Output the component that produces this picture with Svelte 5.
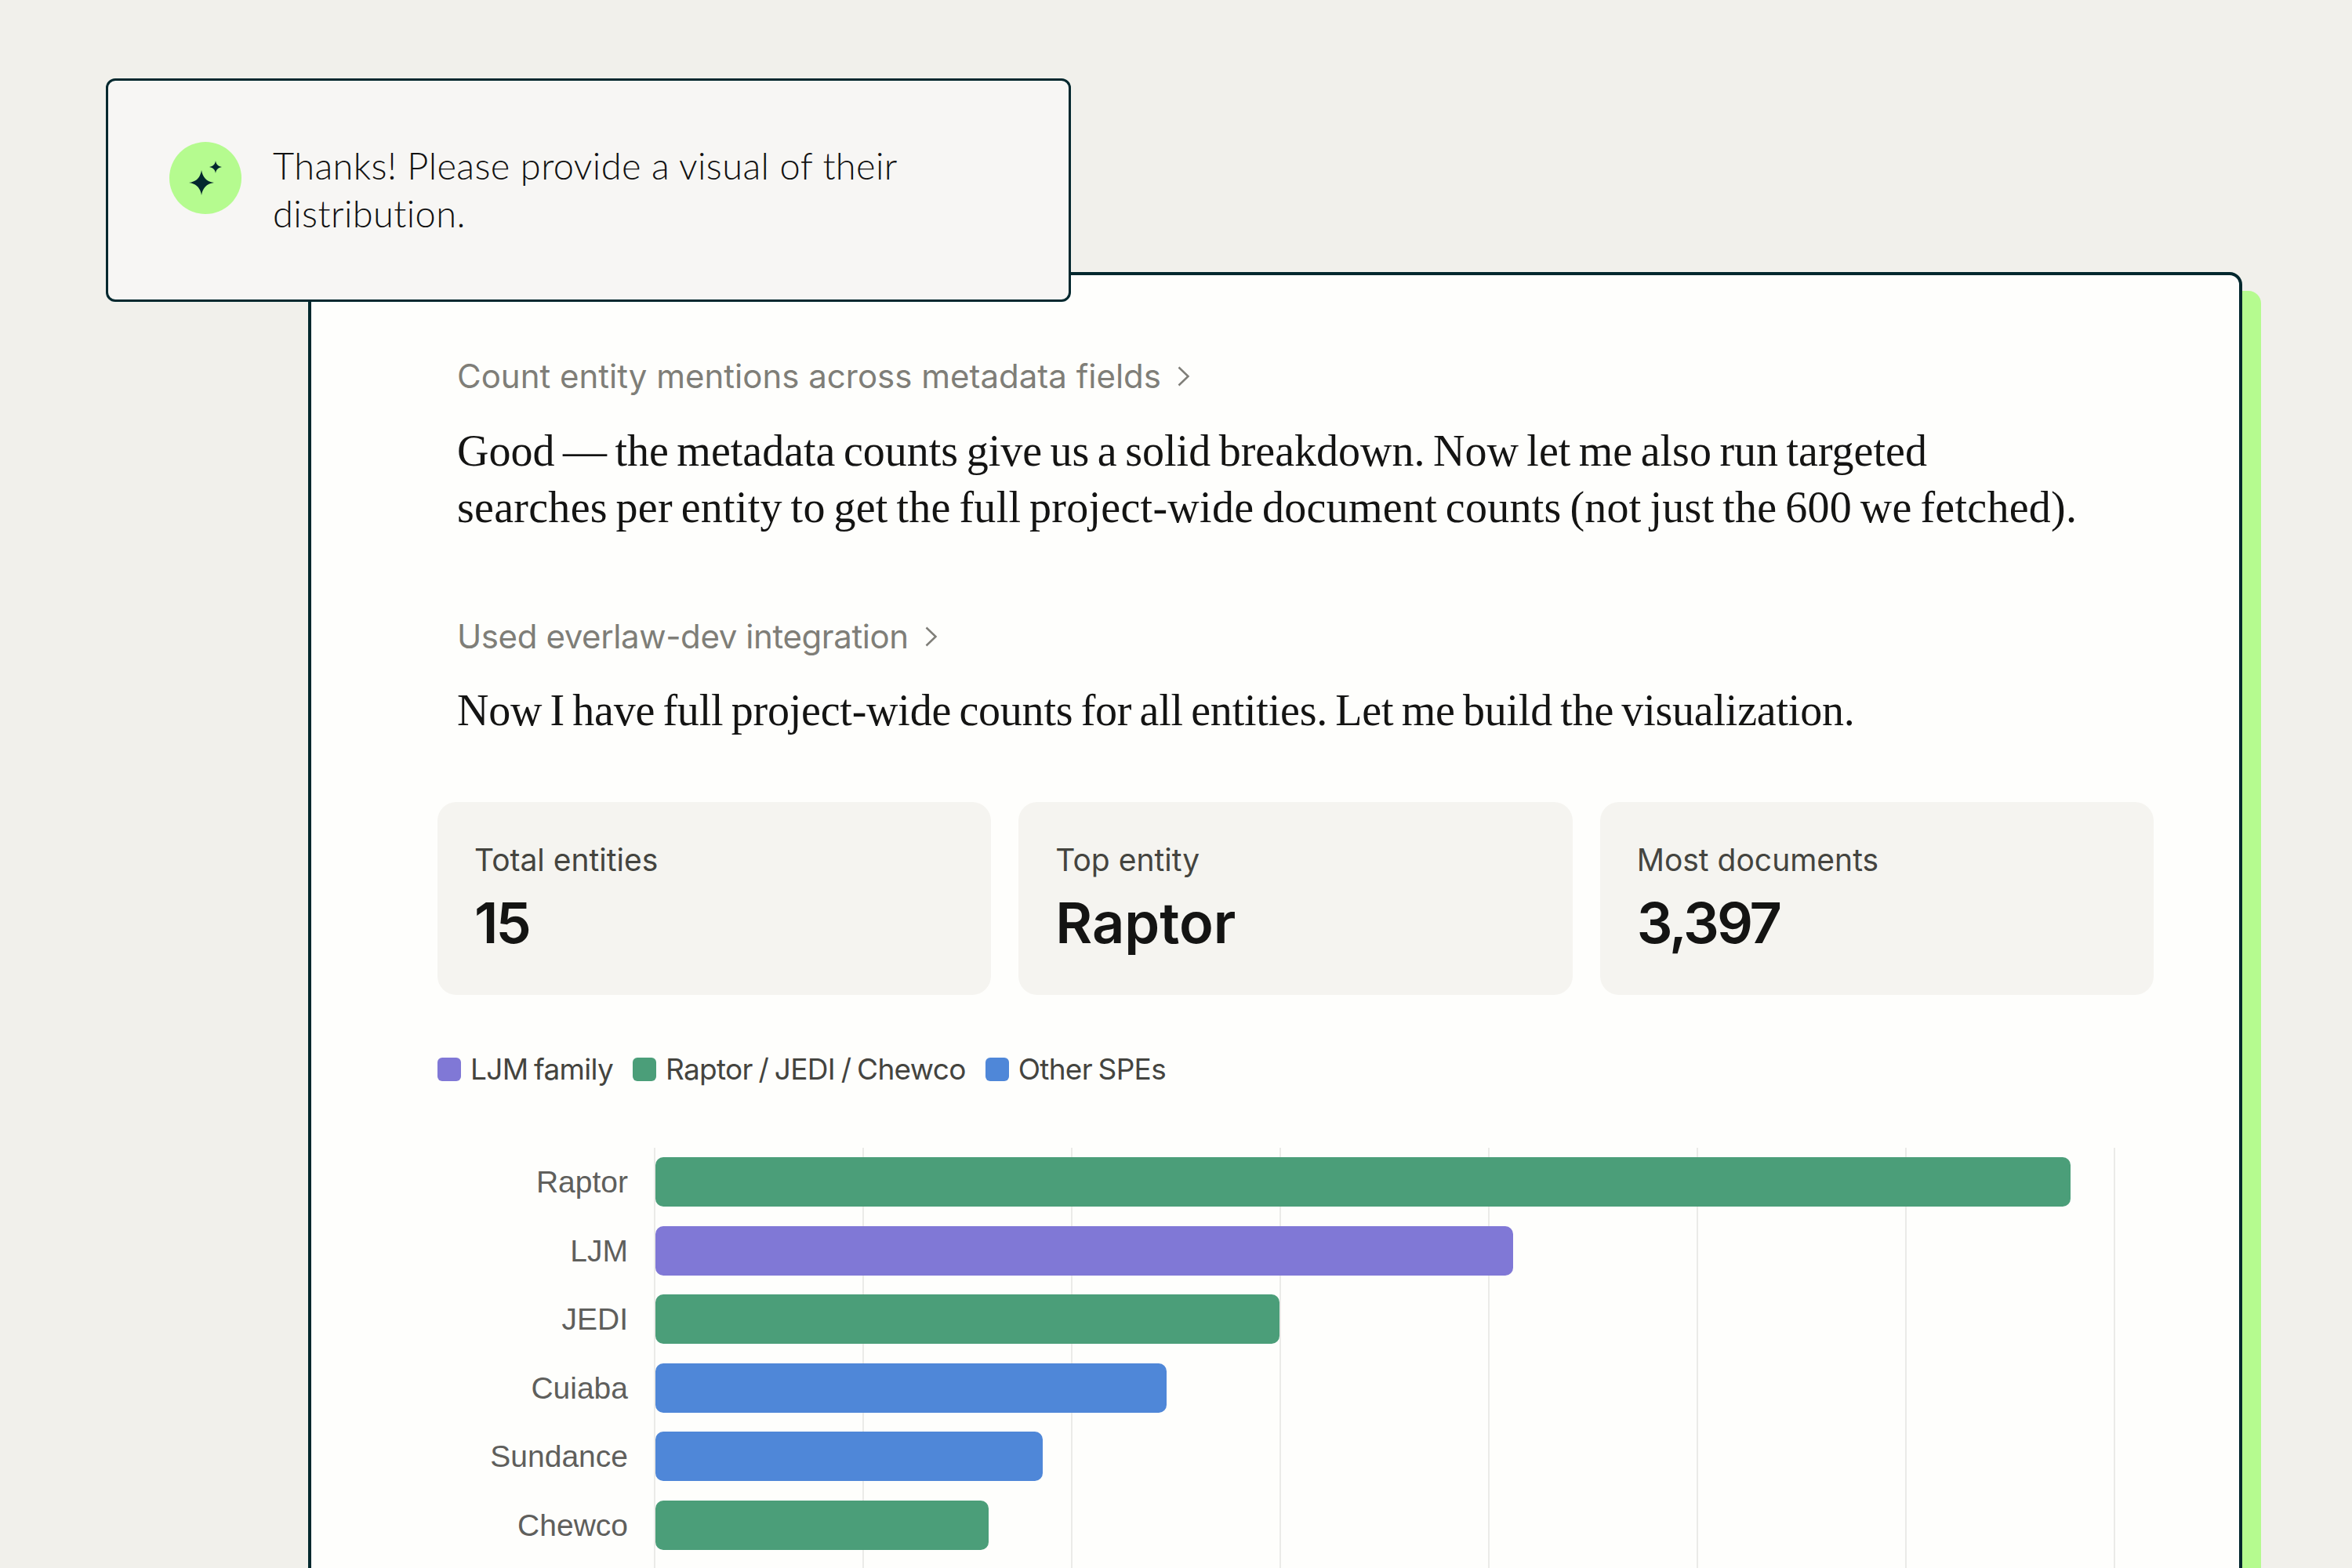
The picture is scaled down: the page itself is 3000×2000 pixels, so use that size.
<script>
  const stats = [
    { label: 'Total entities', value: '15', num: true },
    { label: 'Top entity', value: 'Raptor', num: false },
    { label: 'Most documents', value: '3,397', num: true },
  ];
  const groups = [
    { name: 'LJM family', color: '#8078d6' },
    { name: 'Raptor / JEDI / Chewco', color: '#4b9e79' },
    { name: 'Other SPEs', color: '#4f87d8' },
  ];
  const bars = [
    { name: 'Raptor', docs: 3397, color: '#4b9e79' },
    { name: 'LJM', docs: 2060, color: '#8078d6' },
    { name: 'JEDI', docs: 1500, color: '#4b9e79' },
    { name: 'Cuiaba', docs: 1229, color: '#4f87d8' },
    { name: 'Sundance', docs: 932, color: '#4f87d8' },
    { name: 'Chewco', docs: 803, color: '#4b9e79' },
  ];
  const pxPerDoc = 266 / 500;
</script>

<div class="page">
  <div class="prompt">
    <div class="avatar">
      <svg viewBox="0 0 92 92" width="92" height="92">
        <path d="M41 36C42.5 45 47 50.5 57 52C47 53.5 42.5 59 41 68C39.5 59 35 53.5 25 52C35 50.5 39.5 45 41 36Z" />
        <path d="M59 24C59.6 28.5 62 31 67 32C62 33 59.6 35.5 59 40C58.4 35.5 56 33 51 32C56 31 58.4 28.5 59 24Z" />
      </svg>
    </div>
    <p class="prompt_text">Thanks! Please provide a visual of their distribution.</p>
  </div>

  <div class="panel">
    <div class="step step_first">
      <div class="step_title">
        Count entity mentions across metadata fields
        <svg class="chev" viewBox="0 0 16 26" width="16" height="26"><path d="M1.5 1.5l12 11.5-12 11.5" /></svg>
      </div>
      <p class="step_body">
        Good — the metadata counts give us a solid breakdown. Now let me also run targeted<br />
        <span class="loose">searches per entity to get the full project-wide document counts (not just the 600 we fetched).</span>
      </p>
    </div>
    <div class="step">
      <div class="step_title narrow">
        Used everlaw-dev integration
        <svg class="chev" viewBox="0 0 16 26" width="16" height="26"><path d="M1.5 1.5l12 11.5-12 11.5" /></svg>
      </div>
      <p class="step_body tight">Now I have full project-wide counts for all entities. Let me build the visualization.</p>
    </div>

    <div class="stats">
      {#each stats as stat}
        <div class="stat">
          <div class="stat_label">{stat.label}</div>
          <div class="stat_value" class:num={stat.num}>{stat.value}</div>
        </div>
      {/each}
    </div>

    <div class="legend">
      {#each groups as group}
        <div class="legend_item">
          <span class="swatch" style="background: {group.color}"></span>
          {group.name}
        </div>
      {/each}
    </div>

    <div class="chart">
      <div class="chart_names">
        {#each bars as bar}
          <div class="chart_name">{bar.name}</div>
        {/each}
      </div>
      <div class="chart_plot">
        {#each bars as bar}
          <div class="bar" style="width: {bar.docs * pxPerDoc - 2}px; background: {bar.color}"></div>
        {/each}
      </div>
    </div>
  </div>
</div>

<style>
  :global(body) {
    margin: 0;
  }
  .page {
    width: 3000px;
    height: 2000px;
    overflow: hidden;
    background: #f1f0eb;
    box-sizing: border-box;
    padding-top: 100px;
  }
  .prompt {
    position: relative;
    z-index: 1;
    display: flex;
    align-items: flex-start;
    gap: 40px;
    box-sizing: border-box;
    width: 1231px;
    height: 285px;
    margin-left: 135px;
    padding: 78px 78px 0;
    border: 3px solid #03282e;
    border-radius: 12px;
    background: #f7f6f4;
  }
  .avatar {
    flex: none;
    width: 92px;
    height: 92px;
    border-radius: 50%;
    background: #b5fb8f;
    display: flex;
  }
  .avatar path {
    fill: #03282e;
  }
  .prompt_text {
    margin: 0;
    font-family: Lato, sans-serif;
    font-weight: 300;
    font-size: 47px;
    line-height: 61px;
    letter-spacing: 0.38px;
    color: #111;
  }
  .panel {
    box-sizing: border-box;
    width: 2467px;
    height: 1700px;
    margin-left: 393px;
    margin-top: -38px;
    padding: 0 109px 0 161px;
    border: 4px solid #03282e;
    border-radius: 16px;
    background: #fefefc;
    box-shadow: 24px 24px 0 #b5fb8f;
  }
  .step {
    padding-left: 25px;
  }
  .step_first {
    padding-top: 101px;
    margin-bottom: 101px;
  }
  .step_title {
    display: flex;
    align-items: center;
    gap: 21px;
    font-family: Inter, sans-serif;
    font-size: 42px;
    line-height: 56px;
    color: #7f7e78;
  }
  .narrow {
    letter-spacing: -0.4px;
  }
  .chev path {
    fill: none;
    stroke: #7f7e78;
    stroke-width: 2.5;
  }
  .step_body {
    margin: 31px 0 0;
    font-family: 'Liberation Serif', serif;
    font-size: 56px;
    line-height: 72px;
    word-spacing: -3.5px;
    color: #141413;
  }
  .loose {
    letter-spacing: 0.27px;
  }
  .tight {
    margin-top: 30px;
    letter-spacing: -0.21px;
  }
  .stats {
    display: grid;
    grid-template-columns: repeat(3, 1fr);
    gap: 35px;
    margin-top: 81px;
  }
  .stat {
    height: 246px;
    box-sizing: border-box;
    padding: 46px 47px 0;
    border-radius: 24px;
    background: #f5f4f0;
  }
  .stat_label {
    font-family: Inter, sans-serif;
    font-size: 39px;
    line-height: 56px;
    color: #44443f;
  }
  .stat_value {
    margin-top: 10px;
    font-family: Inter, sans-serif;
    font-weight: 600;
    font-size: 72px;
    line-height: 84px;
    color: #141413;
  }
  .num {
    letter-spacing: -3px;
  }
  .legend {
    display: flex;
    gap: 25px;
    margin-top: 69px;
  }
  .legend_item {
    display: flex;
    align-items: center;
    gap: 12px;
    font-family: Inter, sans-serif;
    font-size: 37px;
    line-height: 52px;
    letter-spacing: -0.7px;
    word-spacing: -2px;
    color: #44443f;
  }
  .swatch {
    width: 30px;
    height: 30px;
    border-radius: 6px;
  }
  .chart {
    display: flex;
    margin-top: 74px;
  }
  .chart_names {
    width: 243px;
    margin-right: 33px;
    padding-top: 12px;
    flex: none;
  }
  .chart_name {
    height: 87.5px;
    line-height: 63px;
    text-align: right;
    font-family: 'Liberation Sans', sans-serif;
    font-size: 39px;
    color: #5f5f5c;
  }
  .chart_plot {
    width: 1864px;
    height: 600px;
    padding-top: 12px;
    background: repeating-linear-gradient(to right, #ebebe8 0 2px, transparent 2px 266px);
  }
  .bar {
    height: 63px;
    margin: 0 0 24.5px 2px;
    border-radius: 10px;
  }
</style>
